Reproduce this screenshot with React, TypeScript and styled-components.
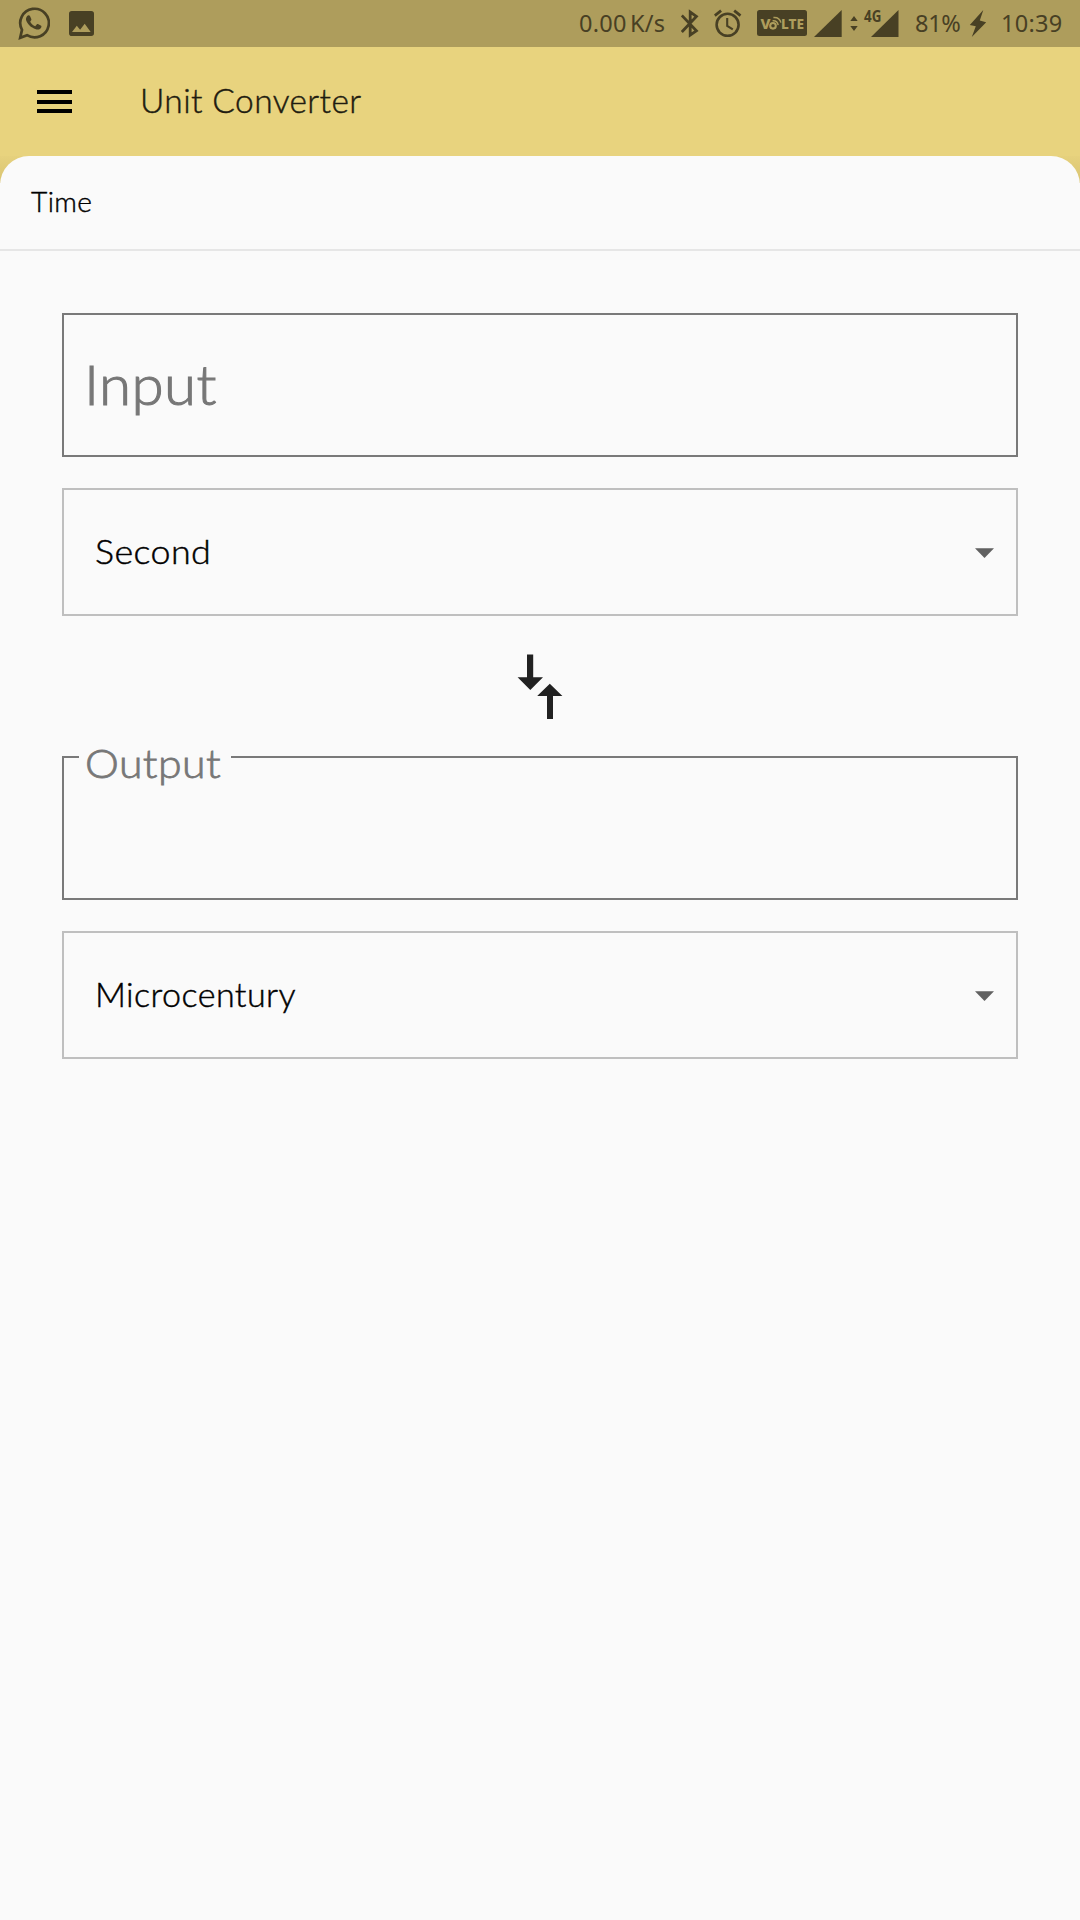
import React from "react";
import styled, { createGlobalStyle } from "styled-components";

const INK = "#484024";
const SHEET = "#fafafa";

const GlobalStyle = createGlobalStyle`
  *, *::before, *::after { box-sizing: border-box; }
  html, body { margin: 0; padding: 0; background: ${SHEET}; }
  body { font-family: Lato, "Liberation Sans", sans-serif; }
`;

const Screen = styled.div`
  display: flex;
  flex-direction: column;
  width: 1080px;
  height: 1920px;
  overflow: hidden;
  background: ${SHEET};
`;

const StatusBar = styled.header`
  display: flex;
  align-items: flex-start;
  justify-content: space-between;
  flex: none;
  height: 47px;
  padding: 0 16px 0 17px;
  background: #ae9d5c;
  color: ${INK};
`;

const StatusGroup = styled.div`
  display: flex;
  align-items: flex-start;
  height: 47px;
`;

const StatusIcon = styled.svg<{ $gap?: number }>`
  flex: none;
  display: block;
  height: 47px;
  margin-left: ${(p) => p.$gap ?? 0}px;
`;

const StatusText = styled.span<{ $width: number; $gap?: number; $spacing?: number }>`
  flex: none;
  width: ${(p) => p.$width}px;
  margin-left: ${(p) => p.$gap ?? 0}px;
  font-family: "Noto Sans", sans-serif;
  font-size: 23.5px;
  line-height: 47px;
  letter-spacing: ${(p) => p.$spacing ?? 0}px;
  word-spacing: -3px;
  white-space: nowrap;
`;

const AppBar = styled.div`
  display: flex;
  align-items: center;
  flex: none;
  height: 109px;
  padding-left: 37px;
  background: #e8d37e;
`;

const MenuButton = styled.button`
  display: flex;
  flex-direction: column;
  gap: 5.5px;
  width: 35px;
  margin: 0;
  padding: 0;
  border: 0;
  background: none;
`;

const MenuLine = styled.span`
  display: block;
  height: 4px;
  background: #000;
`;

const Title = styled.h1`
  margin: 0 0 3px 68px;
  font-size: 33.5px;
  font-weight: 300;
  line-height: 40px;
  letter-spacing: 0.4px;
  color: #1e1b10;
  -webkit-text-stroke: 0.45px currentColor;
`;

const SheetBackdrop = styled.div`
  flex: none;
  height: 95px;
  background: linear-gradient(#e6d17d 0, #d9c472 27px, ${SHEET} 27px);
`;

const SheetHeader = styled.div`
  display: flex;
  align-items: center;
  height: 95px;
  padding: 0 31px;
  border-bottom: 2px solid #e6e6e6;
  border-radius: 29px 29px 0 0;
  background: ${SHEET};
`;

const Category = styled.span`
  margin-bottom: 1px;
  font-size: 26.5px;
  font-weight: 300;
  line-height: 32px;
  letter-spacing: 0.4px;
  color: #000;
  transform: scaleX(1.06);
  transform-origin: left center;
  -webkit-text-stroke: 0.4px currentColor;
`;

const Form = styled.main`
  display: flex;
  flex-direction: column;
  flex: 1;
  padding: 62px 62px 0;
`;

const Field = styled.div`
  position: relative;
  display: flex;
  align-items: center;
  flex: none;
  height: 144px;
  padding: 0 20px;
  border: 2px solid #797979;
`;

const Placeholder = styled.span`
  margin-bottom: 2px;
  font-size: 56px;
  font-weight: 300;
  line-height: 68px;
  letter-spacing: 0.4px;
  color: #777;
  transform: scaleX(1.04);
  transform-origin: left center;
  -webkit-text-stroke: 1.1px currentColor;
`;

const FloatingLabel = styled.span`
  position: absolute;
  top: -19px;
  left: 15px;
  width: 152px;
  padding-left: 6px;
  font-size: 40px;
  font-weight: 300;
  line-height: 48px;
  white-space: nowrap;
  color: #777;
  background: ${SHEET};
  -webkit-text-stroke: 0.8px currentColor;
`;

const LabelText = styled.span`
  display: inline-block;
  letter-spacing: 0.4px;
  transform: scaleX(1.07);
  transform-origin: left center;
`;

const Select = styled.div`
  display: flex;
  align-items: center;
  justify-content: space-between;
  flex: none;
  height: 128px;
  margin-top: 31px;
  padding: 0 22px 0 31px;
  border: 2px solid #bfbfbf;
`;

const SelectValue = styled.span<{ $stretch: number }>`
  margin-bottom: 3px;
  font-size: 33.5px;
  font-weight: 300;
  line-height: 40px;
  letter-spacing: 0.4px;
  color: #000;
  transform: scaleX(${(p) => p.$stretch});
  transform-origin: left center;
  -webkit-text-stroke: 0.45px currentColor;
`;

const Caret = styled.svg`
  display: block;
  width: 19px;
  height: 10px;
  margin-top: 2px;
`;

const SwapRow = styled.div`
  display: flex;
  justify-content: center;
  flex: none;
  height: 140px;
  padding-top: 38px;
`;

const SwapIcon = styled.svg`
  display: block;
  width: 46px;
  height: 66px;
`;

function UnitSelect({ value, stretch }: { value: string; stretch: number }) {
  return (
    <Select>
      <SelectValue $stretch={stretch}>{value}</SelectValue>
      <Caret viewBox="0 0 19 10">
        <path d="M0 0.3h19L9.5 10z" fill="#616161" />
      </Caret>
    </Select>
  );
}

export default function App() {
  return (
    <Screen>
      <GlobalStyle />
      <StatusBar>
        <StatusGroup>
          <StatusIcon width="33" viewBox="18 0 33 47" fill="none" stroke={INK}>
            <path d="M21.2 37.8l1.8-7.9A14.3 14.3 0 1 1 28 35.2z" strokeWidth="2.7" strokeLinejoin="miter" />
            <path
              d="M28 16.2c1-1.3 2.6-1.2 3.2.2l1.1 2.7c.3.8-.1 1.5-1.1 2.6 1.2 2.2 2.8 3.7 5 4.6l1.5-1.7c.5-.6 1-.6 1.7-.3l2.3 1.1c.8.4.9.8.6 1.8-.8 2.2-3.2 2.7-5.4 2-5.2-1.5-8.5-5.1-9.7-8.6-.5-1.6-.1-3.2.8-4.4z"
              fill={INK}
              stroke="none"
            />
          </StatusIcon>
          <StatusIcon width="25" viewBox="69 0 25 47" $gap={19}>
            <path
              fillRule="evenodd"
              fill={INK}
              d="M71.8 11h19.4a2.8 2.8 0 0 1 2.8 2.8v19.4a2.8 2.8 0 0 1-2.8 2.8H71.8a2.8 2.8 0 0 1-2.8-2.8V13.8a2.8 2.8 0 0 1 2.8-2.8zM72 32h18.7l-6-8.3-4.6 6-3.3-4z"
            />
          </StatusIcon>
        </StatusGroup>
        <StatusGroup>
          <StatusText $width={102} $spacing={0.25}>0.00 K/s</StatusText>
          <StatusIcon width="18" viewBox="681 0 18 47" fill="none" stroke={INK} strokeWidth="2.8">
            <path d="M681.8 15.4l14.6 15.4-6.2 4.2V12l6.2 4.4L681.8 32" />
          </StatusIcon>
          <StatusIcon width="28" viewBox="714 0 28 47" $gap={15} fill="none" stroke={INK}>
            <circle cx="727.6" cy="24.8" r="11" strokeWidth="2.6" />
            <path d="M727.2 18v8l5.6 3.4" strokeWidth="2.1" />
            <path d="M714.8 15.6l6.3-5M740.5 15.6l-6.3-5" strokeWidth="2.8" />
          </StatusIcon>
          <StatusIcon width="50" viewBox="757 0 50 47" $gap={15}>
            <rect x="757" y="10" width="50" height="26" rx="2.5" fill={INK} />
            <g fill="#ae9d5c" fontFamily="Noto Sans, sans-serif" fontWeight="800" fontSize="14.5">
              <text x="760.5" y="29.3" textLength="10" lengthAdjust="spacingAndGlyphs">V</text>
              <text x="781" y="29.3" textLength="23" lengthAdjust="spacingAndGlyphs">LTE</text>
            </g>
            <g fill="none" stroke="#ae9d5c">
              <circle cx="773" cy="25.8" r="2.8" strokeWidth="2.1" />
              <path d="M772.6 20.8q4.6-.6 5.6 4.4M773.4 17.5q6.2-.5 7.5 5.2" strokeWidth="1.4" />
            </g>
          </StatusIcon>
          <StatusIcon width="28" viewBox="814 0 28 47" $gap={7}>
            <path d="M814 37L841.7 10v27z" fill={INK} />
          </StatusIcon>
          <StatusIcon width="49" viewBox="850 0 49 47" $gap={8}>
            <path d="M850.3 21l3.7-5 3.7 5zM850.3 26h7.4l-3.7 5z" fill={INK} />
            <path d="M871 37L898.5 10v27z" fill={INK} />
            <text x="864" y="22.2" fontFamily="Noto Sans, sans-serif" fontSize="15.5" fontWeight="700" fill={INK} textLength="17.3" lengthAdjust="spacingAndGlyphs">4G</text>
          </StatusIcon>
          <StatusText $width={54} $gap={16} $spacing={-0.3}>81%</StatusText>
          <StatusIcon width="17" viewBox="969 0 17 47">
            <path d="M983.3 10l-13.5 15 6 1.2-4 10.8 14.3-14.6-6.3-1.8z" fill={INK} />
          </StatusIcon>
          <StatusText $width={63} $gap={15} $spacing={0.3}>10:39</StatusText>
        </StatusGroup>
      </StatusBar>
      <AppBar>
        <MenuButton aria-label="Menu">
          <MenuLine />
          <MenuLine />
          <MenuLine />
        </MenuButton>
        <Title>Unit Converter</Title>
      </AppBar>
      <SheetBackdrop>
        <SheetHeader>
          <Category>Time</Category>
        </SheetHeader>
      </SheetBackdrop>
      <Form>
        <Field>
          <Placeholder>Input</Placeholder>
        </Field>
        <UnitSelect value="Second" stretch={1.07} />
        <SwapRow>
          <SwapIcon viewBox="517 654 46 66" fill="#212121">
            <path d="M527 654.5h6.2v22.8h9.8l-12.7 12.6-12.7-12.6h9.4zM547 719v-23h-9.8l12.6-12.3 12.6 12.3H553v23z" />
          </SwapIcon>
        </SwapRow>
        <Field>
          <FloatingLabel>
            <LabelText>Output</LabelText>
          </FloatingLabel>
        </Field>
        <UnitSelect value="Microcentury" stretch={1.018} />
      </Form>
    </Screen>
  );
}
